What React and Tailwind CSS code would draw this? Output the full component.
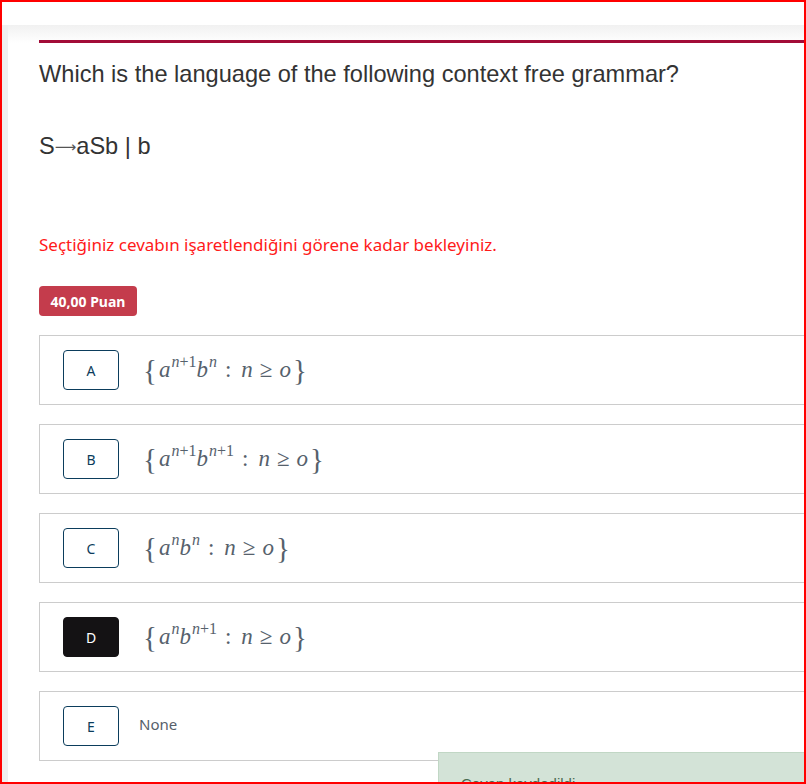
import React from "react";

const mathFont = { fontFamily: '"Liberation Serif", "DejaVu Serif", serif' };

function Sup({ children }) {
  return (
    <sup className="text-[16px] align-baseline ml-[1px]" style={{ verticalAlign: "0.45em" }}>
      {children}
    </sup>
  );
}

function I({ children }) {
  return <span className="italic">{children}</span>;
}

function Math({ a, b }) {
  return (
    <span className="text-[23px] text-[#56616c] whitespace-nowrap flex items-center" style={mathFont}>
      <span className="text-[29px] leading-none mr-[2px]">{"{"}</span>
      <I>a</I>
      <Sup>{a}</Sup>
      <I>b</I>
      <Sup>{b}</Sup>
      <span className="ml-[8px] mr-[10px]">:</span>
      <I>n</I>
      <span className="mx-[7px]">≥</span>
      <I>o</I>
      <span className="text-[29px] leading-none ml-[2px]">{"}"}</span>
    </span>
  );
}

const N = <I>n</I>;
const N1 = (
  <>
    <I>n</I>+1
  </>
);

const options = [
  { l: "A", m: <Math a={N1} b={N} /> },
  { l: "B", m: <Math a={N1} b={N1} /> },
  { l: "C", m: <Math a={N} b={N} /> },
  { l: "D", m: <Math a={N} b={N1} />, sel: true },
  { l: "E", t: "None" },
];

export default function App() {
  return (
    <div className="w-[806px] h-[784px] border-2 border-[#ff0000] overflow-hidden relative bg-white flex flex-col">
      <div className="h-[23px] bg-white shrink-0" />
      <div className="flex flex-1 min-h-0">
        <div className="w-[6px] bg-[#efefef] shrink-0" />
        <div className="flex-1 bg-[linear-gradient(to_bottom,#f1f1f1,#ffffff_18px)] pl-[31px] pt-[15px]">
          <div className="h-[3px] bg-[#a20c38] w-[800px]" />
          <div
            className="mt-[18px] text-[23.6px] leading-[26px] text-[#333333]"
            style={{ fontFamily: '"Liberation Sans", Arial, sans-serif' }}
          >
            Which is the language of the following context free grammar?
          </div>
          <div
            className="mt-[46px] h-[26px] text-[23.6px] leading-[26px] text-[#333333] flex items-center overflow-visible"
            style={{ fontFamily: '"Liberation Sans", Arial, sans-serif' }}
          >
            S
            <span
              className="text-[#555] text-[15px] leading-[26px] relative top-[1px]"
              style={{ fontFamily: '"DejaVu Sans", sans-serif' }}
            >
              ⟶
            </span>
            aSb | b
          </div>
          <div
            className="mt-[74px] text-[17px] leading-[24px] text-[#ff1a1a]"
            style={{ fontFamily: '"Noto Sans", Lato, sans-serif' }}
          >
            Seçtiğiniz cevabın işaretlendiğini görene kadar bekleyiniz.
          </div>
          <div className="mt-[29px] flex">
            <div
              className="h-[30px] w-[98px] rounded-[4px] bg-[#c43c4c] text-white text-[14px] font-bold flex items-center justify-center"
              style={{ fontFamily: '"Noto Sans", Lato, sans-serif' }}
            >
              40,00 Puan
            </div>
          </div>
          <div className="mt-[19px] flex flex-col gap-[19px]">
            {options.map((o) => (
              <div
                key={o.l}
                className="w-[800px] h-[70px] border border-[#cccccc] flex items-center pl-[23px]"
              >
                <div
                  className={
                    "w-[56px] h-[40px] rounded-[4px] border flex items-center justify-center text-[14px] shrink-0 " +
                    (o.sel
                      ? "bg-[#141214] border-[#141214] text-white"
                      : "border-[#0b3d5c] text-[#0b3d5c]")
                  }
                  style={{ fontFamily: '"Noto Sans", Lato, sans-serif' }}
                >
                  {o.l}
                </div>
                {o.m ? (
                  <div className="ml-[24px]">{o.m}</div>
                ) : (
                  <div
                    className="ml-[20px] text-[15px] text-[#56606a] -mt-[3px]"
                    style={{ fontFamily: '"Noto Sans", Lato, sans-serif' }}
                  >
                    {o.t}
                  </div>
                )}
              </div>
            ))}
          </div>
        </div>
      </div>
      <div
        className="absolute left-[436px] top-[750px] w-[400px] h-[60px] bg-[#d3e3d7] border border-[#c1d7c5] pl-[22px] pt-[21px] text-[15px] leading-[20px] text-[#4a6b50]"
        style={{ fontFamily: '"Liberation Sans", Arial, sans-serif' }}
      >
        Cevap kaydedildi
      </div>
    </div>
  );
}
